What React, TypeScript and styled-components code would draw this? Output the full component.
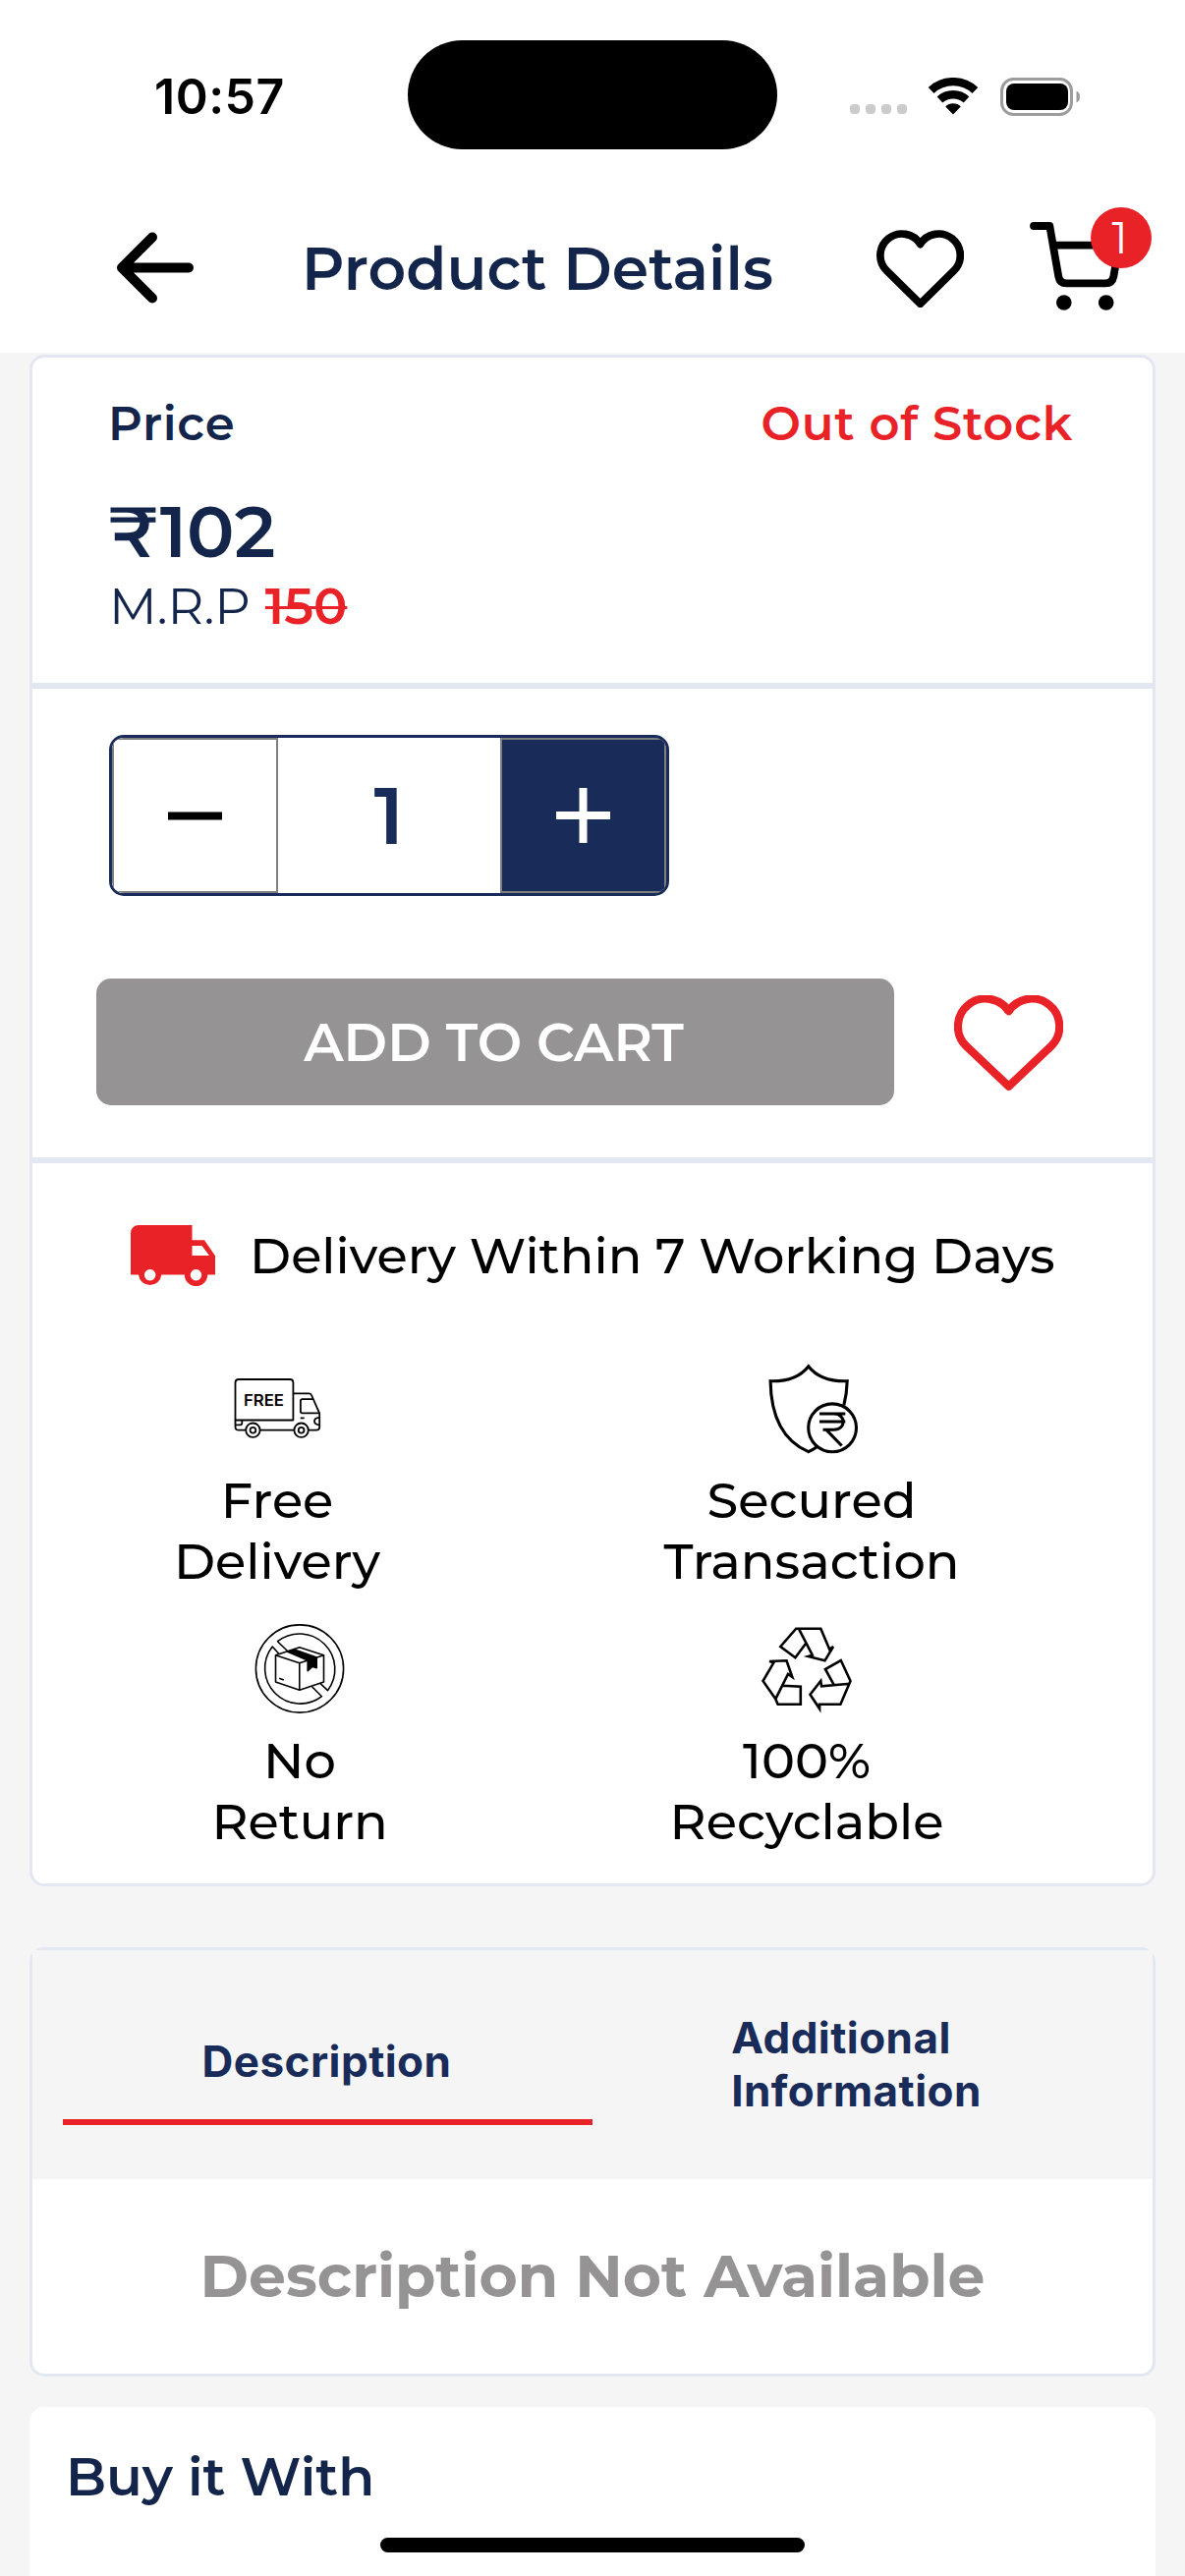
import React from "react";
import styled, { createGlobalStyle } from "styled-components";

const color = {
  ink: "#14254c",
  navy: "#192b59",
  red: "#e92228",
  line: "#e3e7f1",
  page: "#f5f5f5",
  muted: "#959394",
};

const GlobalStyle = createGlobalStyle`
  *, *::before, *::after { box-sizing: border-box; }
  body { margin: 0; background: ${color.page}; }
  svg { display: block; flex: none; }
  button { margin: 0; padding: 0; border: 0; background: none; font: inherit; color: inherit; }
`;

const Screen = styled.div`
  position: relative;
  width: 1206px;
  height: 2622px;
  overflow: hidden;
  background: ${color.page};
  font-family: Montserrat, Inter, sans-serif;
  color: #000;
`;

const Label = styled.span<{ $size: number; $weight?: number; $track?: number; $color?: string; $line?: number }>`
  display: block;
  white-space: nowrap;
  font-size: ${(p) => p.$size}px;
  font-weight: ${(p) => p.$weight ?? 500};
  letter-spacing: ${(p) => p.$track ?? 0}px;
  line-height: ${(p) => p.$line ?? 62}px;
  color: ${(p) => p.$color ?? "#000"};
`;

const SystemLabel = styled(Label)`
  font-family: Inter, sans-serif;
`;

/* ---------- status bar ---------- */

const StatusBar = styled.div`
  display: flex;
  align-items: center;
  height: 196px;
  padding-left: 157px;
  background: #fff;
`;

const Clock = styled.div`
  width: 258px;
`;

const Island = styled.div`
  width: 376px;
  height: 111px;
  margin-bottom: 3px;
  border-radius: 56px;
  background: #000;
`;

const Signal = styled.div`
  display: flex;
  gap: 6px;
  margin: 26px 22px 0 74px;
`;

const SignalDot = styled.i`
  width: 10px;
  height: 10px;
  border-radius: 4px;
  background: #cbcbcb;
`;

const StatusIcons = styled.div`
  display: flex;
  align-items: center;
  gap: 23px;
`;

/* ---------- header ---------- */

const Header = styled.header`
  display: flex;
  align-items: center;
  height: 163px;
  padding: 0 0 8px 118px;
  background: #fff;
`;

const BackButton = styled.button`
  margin-bottom: 2px;
`;

const HeaderTitle = styled.div`
  width: 585px;
  margin-left: 110px;
`;

const CartButton = styled.button`
  position: relative;
  margin: 0 0 5px 67px;
`;

const Badge = styled.span`
  position: absolute;
  top: -15px;
  left: 62px;
  display: flex;
  align-items: center;
  justify-content: center;
  width: 62px;
  height: 62px;
  padding-right: 3px;
  border-radius: 50%;
  background: ${color.red};
`;

/* ---------- cards ---------- */

const Content = styled.main`
  display: flex;
  flex-direction: column;
  padding: 2px 30px 0;
`;

const Card = styled.section<{ $top?: number }>`
  margin-top: ${(p) => p.$top ?? 0}px;
  border: 3px solid ${color.line};
  border-radius: 15px;
  background: #fff;
`;

const PlainCard = styled.section`
  height: 200px;
  margin-top: 31px;
  padding: 40px 37px;
  border-radius: 15px;
  background: #fff;
`;

const PriceBlock = styled.div`
  height: 331px;
  padding: 36px 81px 0 77px;
`;

const PriceHead = styled.div`
  display: flex;
  justify-content: space-between;
  margin-bottom: 34px;
`;

const MrpRow = styled.div`
  display: flex;
  gap: 15px;
  padding: 1px 0 0 1px;
`;

const OldPrice = styled(Label)`
  text-decoration: line-through;
  text-decoration-thickness: 3px;
`;

const BuyBlock = styled.div`
  height: 489px;
  padding: 47px 65px 0;
  border: solid ${color.line};
  border-width: 6px 0;
`;

const Stepper = styled.div`
  display: flex;
  width: 570px;
  height: 164px;
  margin-left: 13px;
  border: 3px solid ${color.navy};
  border-radius: 15px;
  overflow: hidden;
`;

const StepButton = styled.button<{ $filled?: boolean }>`
  display: flex;
  align-items: center;
  justify-content: center;
  width: 169px;
  border: 2px solid #7f7f7f;
  background: ${(p) => (p.$filled ? color.navy : "#fff")};
  color: ${(p) => (p.$filled ? "#fff" : "#000")};
`;

const Quantity = styled.div`
  flex: 1;
  display: flex;
  align-items: center;
  justify-content: center;
`;

const ActionRow = styled.div`
  display: flex;
  align-items: center;
  gap: 61px;
  margin-top: 84px;
`;

const CartAction = styled.button`
  display: flex;
  align-items: center;
  justify-content: center;
  width: 812px;
  height: 129px;
  padding-right: 3px;
  border-radius: 15px;
  background: ${color.muted};
`;

const WishButton = styled.button`
  padding-top: 2px;
`;

const ShippingBlock = styled.div`
  height: 733px;
  padding-top: 63px;
`;

const DeliveryRow = styled.div`
  display: flex;
  gap: 35px;
  height: 62px;
  margin-bottom: 79px;
  padding-left: 100px;
`;

const FeatureRow = styled.div<{ $inset: number; $gap: number }>`
  display: flex;
  gap: ${(p) => p.$gap}px;
  margin-bottom: 33px;
  padding-left: ${(p) => p.$inset}px;
`;

const Feature = styled.div`
  display: flex;
  flex-direction: column;
  align-items: center;
  width: 320px;
`;

const FeatureText = styled.div`
  display: flex;
  flex-direction: column;
  align-items: center;
  margin-top: 16px;
`;

/* ---------- tabs ---------- */

const Tabs = styled.div`
  display: flex;
  height: 233px;
  padding: 55px 31px 0;
  background: ${color.page};
`;

const Tab = styled.button<{ $active?: boolean }>`
  display: flex;
  align-items: center;
  justify-content: center;
  width: 539px;
  height: 123px;
  padding: 0 2px 2px 0;
  border-bottom: ${(p) => (p.$active ? `6px solid ${color.red}` : "0")};
  text-align: left;
`;

const TabBody = styled.div`
  display: flex;
  align-items: center;
  justify-content: center;
  height: 198px;
`;

const HomeIndicator = styled.div`
  position: absolute;
  top: 2583px;
  left: 387px;
  width: 432px;
  height: 15px;
  border-radius: 8px;
  background: #000;
`;

/* ---------- icons ---------- */

const WifiIcon = () => (
  <svg width="50" height="38" viewBox="0 0 50 38" fill="none" stroke="#000" strokeWidth="8.4">
    <path d="M2.6 13A32.8 32.8 0 0 1 47.4 13" />
    <path d="M11.5 22.5A19.8 19.8 0 0 1 38.5 22.5" />
    <path d="M25 37.5 17.2 29.5A11 11 0 0 1 32.8 29.5Z" fill="#000" stroke="none" />
  </svg>
);

const BatteryIcon = () => (
  <svg width="81" height="39" viewBox="0 0 81 39">
    <rect x="1.5" y="1.5" width="71" height="36" rx="12" fill="none" stroke="#9c9c9c" strokeWidth="3" />
    <rect x="6" y="6" width="63" height="27" rx="8" />
    <path d="M77.5 13.5C80.5 15 81 17 81 19.5S80.5 24 77.5 25.5Z" fill="#9c9c9c" />
  </svg>
);

const BackIcon = () => (
  <svg width="79" height="73" viewBox="0 0 79 73" fill="none" stroke="#000" strokeWidth="10" strokeLinecap="round" strokeLinejoin="round">
    <path d="M37 5.5 6 36.5 37 67.5M6 36.5H74" />
  </svg>
);

const HeartIcon = () => (
  <svg width="89" height="79" viewBox="0 0 89 79" fill="none" stroke="#000" strokeWidth="7.7" strokeLinejoin="round">
    <path d="M44.6 14.6A21.95 21.95 0 1 0 10.4 41.6L44.6 75.2 78.8 41.6A21.95 21.95 0 1 0 44.6 14.6Z" />
  </svg>
);

const WishIcon = () => (
  <svg width="111" height="97" viewBox="0 0 111 97" fill="none" stroke={color.red} strokeWidth="8.2" strokeLinejoin="round">
    <path d="M55.6 16.2A28.15 28.15 0 1 0 12.1 51.5L55.6 92.7 99.1 51.5A28.15 28.15 0 1 0 55.6 16.2Z" />
  </svg>
);

const CartIcon = () => (
  <svg width="95" height="90" viewBox="0 0 95 90" fill="none" stroke="#000" strokeWidth="7.8" strokeLinecap="round" strokeLinejoin="round">
    <path d="M4 4H20.3L29.3 55.5Q30.5 62.4 37.5 62.4H77Q84 62.4 85.3 55.5L91 23.7H24" />
    <circle cx="34.8" cy="82" r="7.8" fill="#000" stroke="none" />
    <circle cx="77.7" cy="82" r="7.8" fill="#000" stroke="none" />
  </svg>
);

const MinusIcon = () => (
  <svg width="55" height="57" viewBox="0 0 55 57">
    <path d="M0 24.5H55V32.5H0Z" fill="currentColor" />
  </svg>
);

const PlusIcon = () => (
  <svg width="55" height="57" viewBox="0 0 55 57">
    <path d="M0 24H55V32H0ZM23.5 0H31.5V56H23.5Z" fill="currentColor" />
  </svg>
);

const TruckIcon = () => (
  <svg width="86" height="62" viewBox="0 0 86 62" fill={color.red}>
    <path
      fillRule="evenodd"
      d="M8 0H62.5V15.3H75L86 31.3V50.5H78.2A11.7 11.7 0 0 1 54.8 50.5H31.3A11.7 11.7 0 0 1 8 50.5H0V8A8 8 0 0 1 8 0ZM62.5 21V31H80L72.5 21ZM19.6 45A5.7 5.7 0 1 0 19.7 45ZM66.4 45A5.7 5.7 0 1 0 66.5 45Z"
    />
  </svg>
);

const FreeTruckIcon = () => (
  <svg width="92" height="92" viewBox="0 0 92 92" fill="none" stroke="#000" strokeWidth="1.8" strokeLinejoin="round">
    <path d="M3.5 57.5V19.5Q3.5 16 7 16H59Q62.4 16 62.4 19.5V57.5Z" />
    <path d="M3.5 57V64.5Q3.5 67.7 7 67.7H14M29 67.7H63.2M78 67.7H86Q89.2 67.7 89.2 64.5V50.7L81 32Q80.3 30.3 78.5 30.3H62.4" />
    <path d="M89 50.3H71.5Q69.9 50.3 69.9 48.5V38Q69.9 36.2 71.7 36.2H82M69.7 55.3H73.7" />
    <path d="M89 54.8Q84 55 84 58.5T89 62.3M3.5 62.4H8.5Q10.3 62.4 10.3 60.5V58" />
    <circle cx="21.4" cy="67.7" r="7.2" />
    <circle cx="21.4" cy="67.7" r="2.9" />
    <circle cx="70.6" cy="67.7" r="7.2" />
    <circle cx="70.6" cy="67.7" r="2.9" />
    <text x="12" y="42.6" fontFamily="Inter, sans-serif" fontSize="15.4" fontWeight="600" textLength="41" lengthAdjust="spacingAndGlyphs" fill="#000" stroke="none">
      FREE
    </text>
  </svg>
);

const SecureIcon = () => (
  <svg width="96" height="92" viewBox="-4 0 96 92" fill="none" stroke="#000" strokeWidth="3.1">
    <path d="M76.8 42.5Q79.8 31 80.2 17.7Q53 18.5 40.8 2.7Q28.5 18.5 2.1 17.7C2.5 52 14 78 40.8 89.7Q45.5 87.5 49.7 84.5" />
    <circle cx="65.1" cy="65.3" r="24.4" />
    <path d="M52 51H78.3M52 59H78.3M67 51C79 51 79.5 67.3 66.5 67.3H55.5M59 67.3 74.6 83.5" />
  </svg>
);

const NoReturnIcon = () => (
  <svg width="92" height="92" viewBox="0 0 92 92" fill="none" stroke="#000" strokeWidth="1.6" strokeLinejoin="round">
    <circle cx="46" cy="45.5" r="44.6" />
    <path d="M33.8 27.7 23.5 17.7A36 36 0 0 1 74.5 67.7L66.8 60.3" />
    <path d="M24.8 30.3 18.2 23A36 36 0 0 0 68.5 73.7L58.5 63.7" />
    <path d="M45.8 23.7 70.5 31.7V59L45.8 67.3 21.5 59V31.7ZM21.5 31.7 45.8 39.7 70.5 31.7M45.8 39.7V67.3M25.2 55.3 29.8 57" />
    <path d="M33.8 28.3 40.5 26 63.2 34V44.7L58.8 43.3 54.2 47.7V37Z" fill="#000" />
  </svg>
);

const RecycleIcon = () => (
  <svg width="92" height="92" viewBox="0 0 92 92" fill="none" stroke="#000" strokeWidth="2.6">
    <path d="M44.8 20.3 34.4 34.3 19.3 23 35.2 4.7H60.3L69.2 25.7 73 23 64.5 37.3 47.5 33 51.8 31.7 38.3 5.7" />
    <path d="M14.3 76.3 1.5 58 12.4 39.3 8.1 38 25.5 37.3 31.3 54 27 51 14.3 76.3 16.6 81.7H39.8V63.7L21.6 62.7" />
    <path d="M73.4 61.3 64.9 46 80.8 37 90.5 58 80.4 81.7H59.1V86.3L49.5 71.7 60.3 58 61.1 63.3 90 60.7" />
  </svg>
);

const FEATURE_ROWS = [
  {
    inset: 89,
    gap: 224,
    items: [
      { icon: <FreeTruckIcon />, lines: ["Free", "Delivery"] },
      { icon: <SecureIcon />, lines: ["Secured", "Transaction"] },
    ],
  },
  {
    inset: 112,
    gap: 196,
    items: [
      { icon: <NoReturnIcon />, lines: ["No", "Return"] },
      { icon: <RecycleIcon />, lines: ["100%", "Recyclable"] },
    ],
  },
];

export default function App() {
  return (
    <Screen>
      <GlobalStyle />
      <StatusBar>
        <Clock>
          <SystemLabel $size={50} $weight={600} $track={0.5}>10:57</SystemLabel>
        </Clock>
        <Island />
        <Signal>
          <SignalDot />
          <SignalDot />
          <SignalDot />
          <SignalDot />
        </Signal>
        <StatusIcons>
          <WifiIcon />
          <BatteryIcon />
        </StatusIcons>
      </StatusBar>

      <Header>
        <BackButton aria-label="Back">
          <BackIcon />
        </BackButton>
        <HeaderTitle>
          <Label $size={60} $weight={600} $track={0.1} $color={color.ink}>Product Details</Label>
        </HeaderTitle>
        <HeartIcon />
        <CartButton>
          <CartIcon />
          <Badge>
            <Label $size={45} $weight={400} $color="#fff">1</Label>
          </Badge>
        </CartButton>
      </Header>

      <Content>
        <Card>
          <PriceBlock>
            <PriceHead>
              <Label $size={48} $weight={600} $track={0.8} $color={color.ink}>Price</Label>
              <Label $size={48} $weight={600} $track={0.85} $color={color.red}>Out of Stock</Label>
            </PriceHead>
            <Label $size={72} $weight={600} $line={90} $color={color.ink}>₹102</Label>
            <MrpRow>
              <Label $size={51} $weight={400} $line={60} $color={color.ink}>M.R.P</Label>
              <OldPrice $size={51} $weight={600} $line={60} $color={color.red}>150</OldPrice>
            </MrpRow>
          </PriceBlock>

          <BuyBlock>
            <Stepper>
              <StepButton aria-label="Decrease quantity">
                <MinusIcon />
              </StepButton>
              <Quantity>
                <Label $size={81} $weight={600} $line={90} $color={color.navy}>1</Label>
              </Quantity>
              <StepButton $filled aria-label="Increase quantity">
                <PlusIcon />
              </StepButton>
            </Stepper>
            <ActionRow>
              <CartAction>
                <Label $size={54} $weight={600} $color="#fff">ADD TO CART</Label>
              </CartAction>
              <WishButton aria-label="Add to wishlist">
                <WishIcon />
              </WishButton>
            </ActionRow>
          </BuyBlock>

          <ShippingBlock>
            <DeliveryRow>
              <TruckIcon />
              <Label $size={51}>Delivery Within 7 Working Days</Label>
            </DeliveryRow>
            {FEATURE_ROWS.map((row, i) => (
              <FeatureRow key={i} $inset={row.inset} $gap={row.gap}>
                {row.items.map((item) => (
                  <Feature key={item.lines[0]}>
                    {item.icon}
                    <FeatureText>
                      {item.lines.map((text) => (
                        <Label key={text} $size={51}>{text}</Label>
                      ))}
                    </FeatureText>
                  </Feature>
                ))}
              </FeatureRow>
            ))}
          </ShippingBlock>
        </Card>

        <Card $top={62}>
          <Tabs>
            <Tab $active>
              <SystemLabel $size={44} $weight={700} $track={0.45} $line={54} $color={color.navy}>Description</SystemLabel>
            </Tab>
            <Tab>
              <SystemLabel $size={44} $weight={700} $track={0.45} $line={54} $color={color.navy}>
                Additional
                <br />
                Information
              </SystemLabel>
            </Tab>
          </Tabs>
          <TabBody>
            <Label $size={60} $weight={700} $color={color.muted}>Description Not Available</Label>
          </TabBody>
        </Card>

        <PlainCard>
          <Label $size={54} $weight={600} $color={color.ink}>Buy it With</Label>
        </PlainCard>
      </Content>
      <HomeIndicator />
    </Screen>
  );
}
